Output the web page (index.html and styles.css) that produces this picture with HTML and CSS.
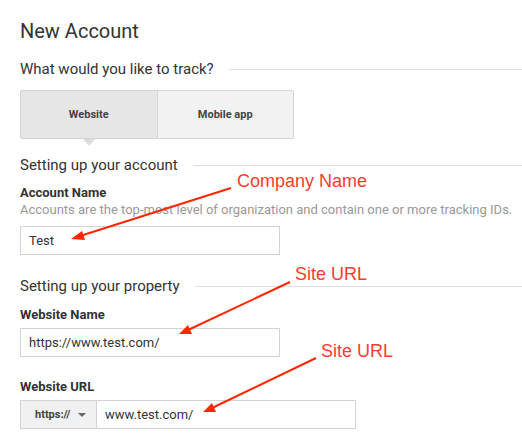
FILE: index.html
```html
<!DOCTYPE html>
<html>
<head>
<meta charset="utf-8">
<link rel="stylesheet" href="styles.css">
</head>
<body>
<div class="page">
  <h1 class="title">New Account</h1>
  <h2 class="section section-track">What would you like to track?</h2>
  <div class="tabs">
    <div class="tab tab-active">Website</div>
    <div class="tab">Mobile app</div>
  </div>

  <h2 class="section section-account">Setting up your account</h2>
  <div class="label label-account">Account Name</div>
  <div class="desc">Accounts are the top-most level of organization and contain one or more tracking IDs.</div>
  <div class="input input-account">Test</div>

  <h2 class="section section-property">Setting up your property</h2>
  <div class="label label-site">Website Name</div>
  <div class="input input-site">https://www.test.com/</div>

  <div class="label label-url">Website URL</div>
  <div class="url-row">
    <div class="proto">https:// <span class="caret"></span></div>
    <div class="url-input">www.test.com/</div>
  </div>

  <svg class="arrows" width="522" height="438" viewBox="0 0 522 438">
    <g stroke="#ff2600" stroke-width="2" fill="#ff2600">
      <line x1="231" y1="188" x2="80" y2="236"/>
      <polygon points="71,239 82,231 85,240" stroke="none"/>
      <line x1="290" y1="282" x2="188" y2="330"/>
      <polygon points="179,334 188,325 192,334" stroke="none"/>
      <line x1="316" y1="358" x2="212" y2="408"/>
      <polygon points="203,412 212,403 216,412" stroke="none"/>
    </g>
  </svg>
  <span class="note note-company">Company Name</span>
  <span class="note note-site1">Site URL</span>
  <span class="note note-site2">Site URL</span>
</div>
</body>
</html>
```

FILE: styles.css
```css
html, body {
  margin: 0;
  padding: 0;
  background: #fff;
}

.page {
  position: relative;
  width: 522px;
  height: 438px;
  padding-left: 20px;
  box-sizing: border-box;
  font-family: Roboto, "Liberation Sans", sans-serif;
  color: #333;
  overflow: hidden;
}

.title {
  margin: 19px 0 0;
  font-size: 20px;
  line-height: 24px;
  font-weight: 400;
  color: #333;
}

.section {
  display: flex;
  align-items: center;
  margin: 0;
  font-size: 15px;
  line-height: 20px;
  font-weight: 400;
  color: #333;
}

.section::after {
  content: "";
  flex: 1;
  height: 1px;
  background: #e0e0e0;
  margin-left: 15px;
  margin-top: 1px;
}

.section-track { margin-top: 16px; }
.section-account { margin-top: 16px; }
.section-property { margin-top: 21px; }

.tabs {
  display: flex;
  margin-top: 11px;
  width: 274px;
}

.tab {
  position: relative;
  flex: 1;
  height: 47px;
  display: flex;
  align-items: center;
  justify-content: center;
  background: #f2f2f2;
  border: 1px solid #d5d5d5;
  font-size: 11px;
  font-weight: 700;
  color: #444;
}

.tab:first-child {
  border-radius: 2px 0 0 2px;
}

.tab:last-child {
  border-left: none;
  border-radius: 0 2px 2px 0;
}

.tab-active {
  background: #e6e6e6;
}

.tab-active::after {
  content: "";
  position: absolute;
  left: 50%;
  bottom: -8px;
  margin-left: -6px;
  border-left: 6px solid transparent;
  border-right: 6px solid transparent;
  border-top: 7px solid #dcdcdc;
}

.label {
  font-size: 13px;
  line-height: 16px;
  font-weight: 700;
  color: #333;
}

.label-account { margin-top: 10px; }
.label-site { margin-top: 11px; }
.label-url { margin-top: 22px; }

.desc {
  margin-top: 1px;
  font-size: 13px;
  line-height: 16px;
  color: #999;
  white-space: nowrap;
}

.input {
  box-sizing: border-box;
  width: 260px;
  height: 29px;
  border: 1px solid #d4d4d4;
  padding: 0 8px;
  font-size: 13px;
  line-height: 27px;
  color: #333;
}

.input-account { margin-top: 8px; }
.input-site { margin-top: 5px; }

.url-row {
  display: flex;
  margin-top: 5px;
  height: 29px;
}

.proto {
  box-sizing: border-box;
  width: 77px;
  display: flex;
  align-items: center;
  padding-left: 14px;
  background: #f1f1f1;
  border: 1px solid #d4d4d4;
  font-size: 11px;
  font-weight: 700;
  color: #444;
}

.caret {
  display: inline-block;
  margin-left: 8px;
  border-left: 4px solid transparent;
  border-right: 4px solid transparent;
  border-top: 4px solid #666;
}

.url-input {
  box-sizing: border-box;
  width: 259px;
  border: 1px solid #d4d4d4;
  border-left: none;
  padding-left: 8px;
  font-size: 13px;
  line-height: 27px;
  color: #333;
}

.arrows {
  position: absolute;
  left: 0;
  top: 0;
  pointer-events: none;
}

.note {
  position: absolute;
  font-family: "Liberation Sans", Arial, sans-serif;
  font-size: 18px;
  line-height: 20px;
  color: #ff3b30;
  white-space: nowrap;
}

.note-company { left: 237px; top: 171px; }
.note-site1 { left: 295px; top: 264px; }
.note-site2 { left: 321px; top: 341px; }
```
